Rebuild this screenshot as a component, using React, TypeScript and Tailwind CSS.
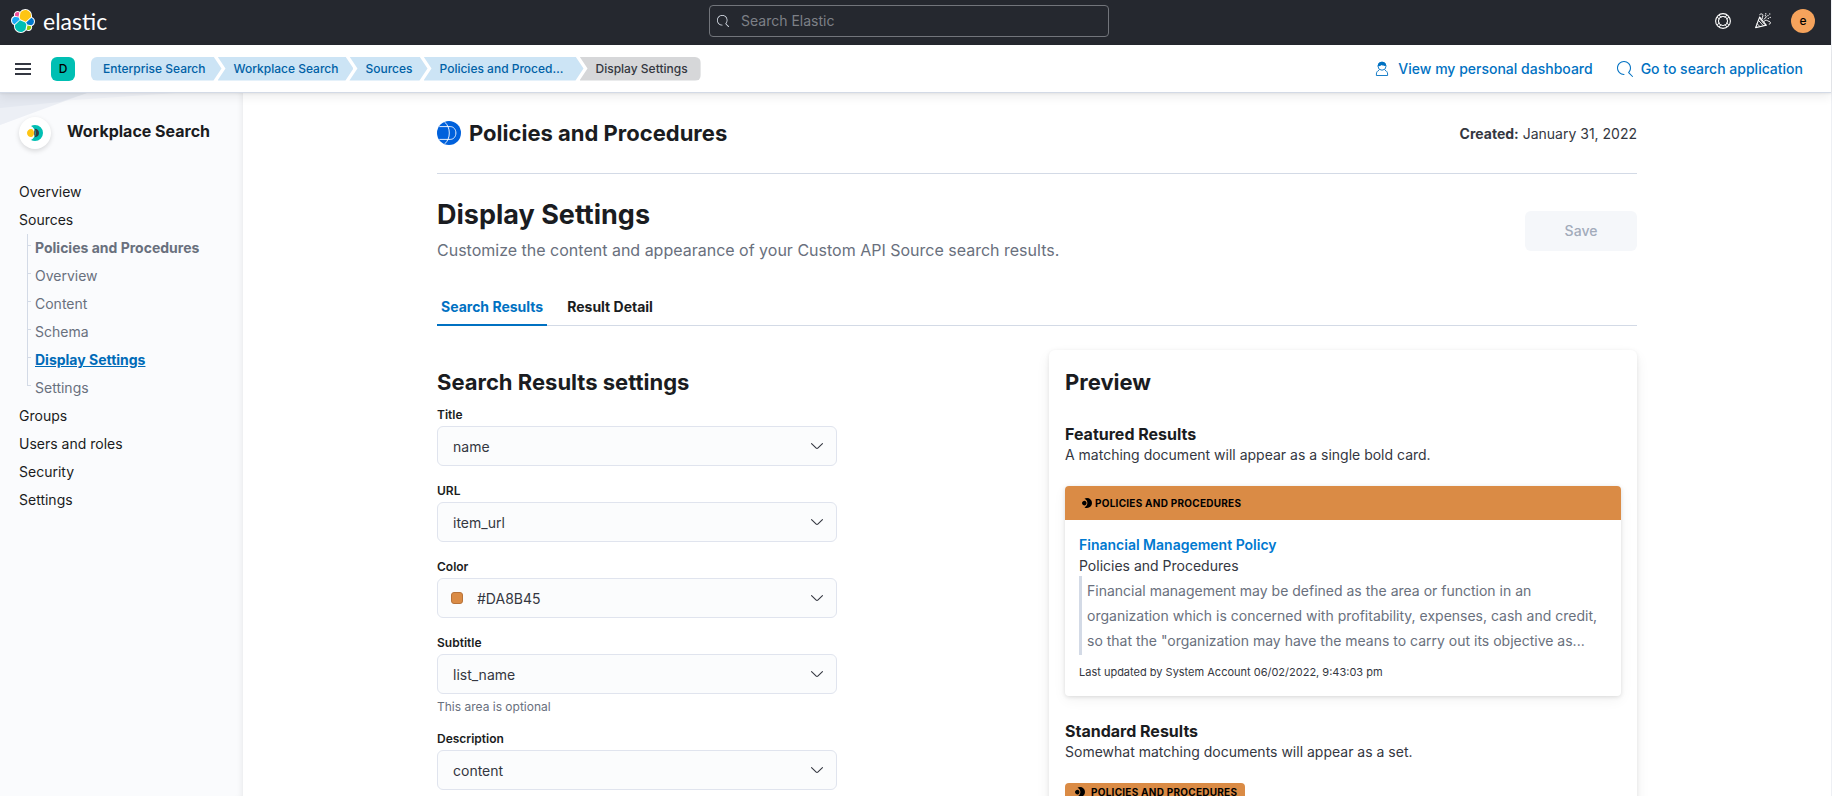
import type { ReactNode } from "react";

type SelectFieldProps = {
  id: string;
  label: string;
  value: string;
  help?: string;
  swatch?: boolean;
};

const crumbs = ["Enterprise Search", "Workplace Search", "Sources", "Policies and Procedures"];

const sourceLinks = [
  { label: "Policies and Procedures", style: "font-bold text-[#69707d]" },
  { label: "Overview", style: "text-[#69707d]" },
  { label: "Content", style: "text-[#69707d]" },
  { label: "Schema", style: "text-[#69707d]" },
  { label: "Display Settings", style: "font-bold text-[#006bb8] underline" },
  { label: "Settings", style: "text-[#69707d]" },
];

function ElasticLogo() {
  const shapes = [
    ["#fec514", "M12.58 13.787l7.002 3.211 7.066-6.213a7.849 7.849 0 00.152-1.557c0-4.287-3.464-7.764-7.733-7.764-2.557 0-4.943 1.255-6.387 3.356l-1.175 6.1 1.075 2.867z"],
    ["#00bfb3", "M5.333 21.228A7.964 7.964 0 005.18 22.814c0 4.298 3.474 7.789 7.743 7.789 2.568 0 4.972-1.274 6.419-3.404l1.166-6.1-1.556-2.99-7.03-3.214-6.589 6.334z"],
    ["#f04e98", "M5.288 9.067l4.8 1.137 1.051-5.477a3.798 3.798 0 00-4.597.014 3.854 3.854 0 00-1.254 4.326z"],
    ["#1ba9f5", "M4.872 10.214A5.346 5.346 0 001.334 15.255a5.34 5.34 0 003.428 4.99l6.73-6.108-1.235-2.655-5.385-1.268z"],
    ["#93c90e", "M20.873 27.199a3.79 3.79 0 002.285.78 3.812 3.812 0 003.079-1.573 3.863 3.863 0 00.521-3.442l-4.795-1.127-1.09 5.362z"],
    ["#0077cc", "M21.848 20.563l5.28 1.238a5.346 5.346 0 003.538-5.042 5.34 5.34 0 00-3.438-4.98l-6.907 6.074 1.527 2.71z"],
  ];
  return (
    <svg viewBox="0 0 32 32" className="size-6 shrink-0" aria-hidden="true">
      {shapes.map(([fill, d]) => (
        <path key={`outline-${fill}`} d={d} fill="#fff" stroke="#fff" strokeWidth="2.6" strokeLinejoin="round" />
      ))}
      {shapes.map(([fill, d]) => (
        <path key={fill} d={d} fill={fill} />
      ))}
    </svg>
  );
}

function SearchIcon({ className }: { className: string }) {
  return (
    <svg viewBox="0 0 16 16" className={className} fill="currentColor" aria-hidden="true">
      <path d="M11.271 11.978l3.872 3.873a.502.502 0 00.708 0 .502.502 0 000-.708l-3.565-3.564c2.38-2.747 2.267-6.923-.342-9.532-2.73-2.73-7.17-2.73-9.898 0-2.728 2.729-2.728 7.17 0 9.9a6.955 6.955 0 004.949 2.05.5.5 0 000-1 5.96 5.96 0 01-4.242-1.757 6.01 6.01 0 010-8.486 6.004 6.004 0 018.484 0 6.01 6.01 0 010 8.486.5.5 0 00.034.738z" />
    </svg>
  );
}

function HelpIcon() {
  return (
    <svg viewBox="0 0 16 16" className="size-4" fill="none" stroke="currentColor" aria-hidden="true">
      <circle cx="8" cy="8" r="7.4" strokeWidth="1.1" />
      <circle cx="8" cy="8" r="4.5" strokeWidth="1.1" />
      <path d="M2.1 4.3l2.7 1.9M4.3 2.1l1.9 2.7M13.9 4.3l-2.7 1.9M11.7 2.1l-1.9 2.7M2.1 11.7l2.7-1.9M4.3 13.9l1.9-2.7M13.9 11.7l-2.7-1.9M11.7 13.9l-1.9-2.7" />
    </svg>
  );
}

function CheerIcon() {
  return (
    <svg viewBox="0 0 16 16" className="size-4" fill="none" stroke="currentColor" strokeLinejoin="round" strokeLinecap="round" aria-hidden="true">
      <path d="M4.6 4.2L.6 14.6l10.6-2.4z" strokeWidth="1.1" />
      <path d="M4.6 4.2c1 3.4 3.3 6.2 6.6 8M3.5 7.4l4.8 5.3M2.2 10.8l2.7 2.7" strokeWidth="0.9" />
      <path d="M4.7 1.600c1.600-1.500 3.600-.6 3.200 1.400-.2 1-.9 1.500-.8 2.600M9.200 8.300c1-1.200 2.300-1.400 3.300-.6.9.8 2.600.5 2.900 1.800.2 1-.4 1.600-1.200 1.600M9.200 6.200l2.400-2.600" strokeWidth="1" />
      <path d="M10.800.7v.2M14.800.9v.2M13 2.400v.2M15.200 4.300v.2M13.300 5.300v.2M10.300 2.600v.2" strokeWidth="1.2" />
    </svg>
  );
}

function UserIcon() {
  return (
    <svg viewBox="0 0 16 16" className="size-4" fill="none" stroke="currentColor" strokeWidth="0.9" aria-hidden="true">
      <circle cx="8" cy="5.2" r="4" />
      <path d="M3.700 5.200C3.700 2.400 5.600.7 8 .7s4.300 1.700 4.300 4.100c-2.400.4-3.700-.1-4.600-.8-.9 1-2.300 1.200-4 1.200z" fill="currentColor" stroke="none" />
      <path d="M5 9.300c-1.700.6-2.600 2-2.600 3.700v1.500h11.200V13c0-1.700-.9-3.100-2.600-3.700" />
    </svg>
  );
}

function WorkplaceIcon() {
  return (
    <svg viewBox="0 0 16 16" className="size-4" aria-hidden="true">
      <path d="M4 1c1.200-.7 2.500-1 4-1a8 8 0 010 16c-1.500 0-2.800-.3-4-1 2.700-1.600 4.200-4 4.200-7S6.700 2.600 4 1z" fill="#00bfb3" />
      <path d="M7.6 3.8c2.800 0 4.400 1.900 4.400 4.200s-1.600 4.200-4.400 4.200c.8-1.200 1.200-2.700 1.200-4.200s-.4-3-1.200-4.200z" fill="#343741" />
      <path d="M7.200 4.200C7.900 5.400 8.200 6.600 8.200 8s-.3 2.600-1 3.800z" fill="#343741" />
      <path d="M4.200 4C5.800 4 7 5.700 7 8s-1.200 4-2.800 4A4 4 0 010 8c0-2.300 1.800-4 4.200-4z" fill="#fec514" />
    </svg>
  );
}

function SourceIcon() {
  return (
    <svg viewBox="0 0 24 24" className="size-6 shrink-0" fill="none" stroke="#fff" strokeWidth="0.9" aria-hidden="true">
      <circle cx="12" cy="12" r="12" fill="#0061dc" stroke="none" />
      <path d="M2.3 5.600h11c3.300 0 5.600 2.800 5.600 6.400s-2.300 6.400-5.600 6.400h-11" />
      <path d="M7.800 1.200C10.800 4 12.300 7.700 12.300 12S10.800 20 7.800 22.800" />
    </svg>
  );
}

function TagIcon() {
  return (
    <svg viewBox="0 0 16 16" className="size-[10px] shrink-0" fill="#000" aria-hidden="true">
      <path d="M4 1c1.200-.7 2.500-1 4-1a8 8 0 010 16c-1.500 0-2.800-.3-4-1 3-1.500 4.600-4 4.600-7S7 2.500 4 1z" />
      <path d="M4 4.200c1.900 0 3.200 1.600 3.200 3.800s-1.300 3.800-3.200 3.800S0 10.200 0 8s2-3.800 4-3.800z" />
    </svg>
  );
}

function SelectField({ id, label, value, help, swatch }: SelectFieldProps) {
  return (
    <div className="flex flex-col items-start pb-[17px]">
      <label htmlFor={id} className="pb-[3px] text-xs leading-4 font-semibold text-[#1a1c21]">
        {label}
      </label>
      <div className="relative w-full max-w-[400px]">
        <select
          id={id}
          defaultValue={value}
          className={`block h-10 w-full appearance-none rounded-md border border-[#e0e4ee] bg-[#fbfcfd] pt-[2px] pr-10 text-sm text-[#343741] ${swatch ? "pl-[39px]" : "pl-[15px]"}`}
        >
          <option>{value}</option>
        </select>
        {swatch && <span className="absolute top-[14px] left-[14px] size-3 rounded-[3px] border border-[#b8733a] bg-[#da8b45]" />}
        <svg viewBox="0 0 16 16" className="pointer-events-none absolute top-3 right-3 size-4" fill="#343741" aria-hidden="true">
          <path d="M13.069 5.157L8.384 9.768a.546.546 0 01-.768 0L2.930 5.158a.552.552 0 00-.771 0 .53.53 0 000 .759l4.684 4.610c.641.631 1.672.63 2.312 0l4.684-4.610a.53.53 0 000-.76.552.552 0 00-.771 0z" />
        </svg>
      </div>
      {help && <p className="pt-[5px] text-xs leading-[15px] text-[#69707d]">{help}</p>}
    </div>
  );
}

function NavItem({ children }: { children: ReactNode }) {
  return (
    <li className="h-7">
      <a href="#" className="leading-7 text-[#1a1c21]">{children}</a>
    </li>
  );
}

function TopBar() {
  return (
    <header className="flex h-[45px] shrink-0 items-center justify-between bg-[#25282f] pb-[3px] text-white">
      <a href="#" className="flex w-[115px] items-center gap-2 pl-[11px]">
        <ElasticLogo />
        <span className="font-[Lato,sans-serif] text-[23px] leading-6">elastic</span>
      </a>
      <div className="flex h-8 w-[400px] items-center gap-3 rounded border border-[#72757b] px-[7px] text-[#dfe5ef]">
        <SearchIcon className="size-3 shrink-0" />
        <input type="search" aria-label="Search Elastic" placeholder="Search Elastic" className="w-full bg-transparent text-sm outline-none placeholder:text-[#7d8087]" />
      </div>
      <div className="flex items-center pr-2">
        <button type="button" aria-label="Help" className="flex size-10 items-center justify-center"><HelpIcon /></button>
        <button type="button" aria-label="News" className="flex size-10 items-center justify-center"><CheerIcon /></button>
        <button type="button" aria-label="Account" className="flex size-10 items-center justify-center">
          <span className="flex size-6 items-center justify-center rounded-full bg-[#f5a35c] text-xs font-medium text-black">e</span>
        </button>
      </div>
    </header>
  );
}

function SubBar() {
  return (
    <div className="relative z-10 flex h-12 shrink-0 items-center border-b border-[#d3dae6] bg-white pr-7 shadow-[0_1px_2px_rgba(0,0,0,0.06),0_4px_10px_rgba(0,0,0,0.07)]">
      <button type="button" aria-label="Toggle navigation" className="flex w-[46px] flex-col items-center gap-[3px]">
        <span className="h-[2px] w-4 bg-[#343741]" />
        <span className="h-[2px] w-4 bg-[#343741]" />
        <span className="h-[2px] w-4 bg-[#343741]" />
      </button>
      <button type="button" className="ml-[5px] flex size-6 items-center justify-center rounded-md bg-[#00bfb3] text-xs font-medium text-black">D</button>
      <nav aria-label="Breadcrumbs" className="ml-4 text-xs font-medium">
        <ol className="flex">
          {crumbs.map((crumb, i) =>
            i === 0 ? (
              <li key={crumb} className="h-6 rounded-l-md bg-[#cce4f5] pr-4 pl-3 leading-6 text-[#0061a6] [clip-path:polygon(0_0,calc(100%-8px)_0,100%_50%,calc(100%-8px)_100%,0_100%)]">
                <a href="#">{crumb}</a>
              </li>
            ) : (
              <li key={crumb} className="-ml-1 h-6 max-w-[160px] truncate bg-[#cce4f5] pr-[15px] pl-4 leading-6 text-[#0061a6] [clip-path:polygon(0_0,calc(100%-8px)_0,100%_50%,calc(100%-8px)_100%,0_100%,8px_50%)]">
                <a href="#">{crumb}</a>
              </li>
            ),
          )}
          <li aria-current="page" className="-ml-1 h-6 rounded-r-md bg-[#d6d7d9] pr-[13px] pl-4 leading-6 text-[#343741] [clip-path:polygon(0_0,100%_0,100%_100%,0_100%,8px_50%)]">
            Display Settings
          </li>
        </ol>
      </nav>
      <div className="ml-auto flex items-center gap-6 text-sm font-medium text-[#0071c2]">
        <a href="#" className="flex items-center gap-2"><UserIcon />View my personal dashboard</a>
        <a href="#" className="flex items-center gap-2"><SearchIcon className="size-4" />Go to search application</a>
      </div>
    </div>
  );
}

function Sidebar() {
  return (
    <aside className="relative w-[243px] shrink-0 bg-[#fafbfd] px-[19px] pt-6 text-sm shadow-[inset_-6px_0_6px_-5px_rgba(0,0,0,0.08)]">
      <svg viewBox="0 0 176 32" className="absolute top-0 left-0 h-8 w-44" aria-hidden="true">
        <path d="M0 0h176L60 8 0 32z" fill="#f3f5fa" />
        <path d="M0 0h87L0 32z" fill="#eceff5" />
        <path d="M0 0h87L60 9 0 15z" fill="#e4e8f0" />
      </svg>
      <div className="relative flex gap-4">
        <span className="flex size-8 items-center justify-center rounded-full bg-white shadow-[0_2px_5px_rgba(0,0,0,0.14)]">
          <WorkplaceIcon />
        </span>
        <h2 className="pt-1 text-base leading-5 font-bold text-[#1a1c21]">Workplace Search</h2>
      </div>
      <nav aria-label="Workplace Search" className="relative pt-[29px]">
        <ul>
          <NavItem>Overview</NavItem>
          <NavItem>Sources</NavItem>
          <li>
            <ul className="pl-2">
              {sourceLinks.map(({ label, style }, i) => (
                <li key={label} className="flex h-7">
                  <span className={`flex w-px bg-[#d3dae6] ${i === sourceLinks.length - 1 ? "h-3" : "h-7"}`} />
                  <span className="mt-[11px] mr-1 h-px w-[3px] bg-[#d3dae6]" />
                  <a href="#" className={`leading-7 ${style}`}>{label}</a>
                </li>
              ))}
            </ul>
          </li>
          <NavItem>Groups</NavItem>
          <NavItem>Users and roles</NavItem>
          <NavItem>Security</NavItem>
          <NavItem>Settings</NavItem>
        </ul>
      </nav>
    </aside>
  );
}

function Preview() {
  return (
    <section className="w-[588px] rounded-md bg-white p-4 text-sm shadow-[0_1px_4px_rgba(0,0,0,0.08),0_6px_14px_rgba(0,0,0,0.07)]">
      <h2 className="text-[22px] leading-8 font-bold text-[#1a1c21]">Preview</h2>
      <h3 className="pt-[25px] text-base leading-[22px] font-bold text-[#1a1c21]">Featured Results</h3>
      <p className="leading-5">A matching document will appear as a single bold card.</p>
      <article className="mt-[21px] overflow-hidden rounded bg-white shadow-[0_1px_4px_rgba(0,0,0,0.12),0_4px_14px_rgba(0,0,0,0.05)]">
        <div className="flex h-[34px] items-center gap-[3px] bg-[#da8b45] px-[17px] text-[10px] font-bold tracking-wide text-black uppercase">
          <TagIcon />Policies and Procedures
        </div>
        <div className="px-[14px] pt-[14px] pb-4">
          <a href="#" className="block leading-[22px] font-semibold text-[#0079d0]">Financial Management Policy</a>
          <p className="leading-5">Policies and Procedures</p>
          <blockquote className="border-l-[3px] border-[#d3dae6] pt-[2px] pb-[2px] pl-[5px] leading-[25px] text-[#69707d]">
            Financial management may be defined as the area or function in an organization which is concerned with profitability, expenses, cash and credit, so that the "organization may have the means to carry out its objective as...
          </blockquote>
          <p className="pt-[9px] text-[11px] leading-4">Last updated by System Account 06/02/2022, 9:43:03 pm</p>
        </div>
      </article>
      <h3 className="pt-6 text-base leading-[22px] font-bold text-[#1a1c21]">Standard Results</h3>
      <p className="leading-5">Somewhat matching documents will appear as a set.</p>
      <div className="mt-[21px] flex">
        <span className="flex h-[18px] items-center gap-[6px] rounded-t bg-[#da8b45] pr-2 pl-[10px] text-[10px] font-bold tracking-wide text-black uppercase">
          <TagIcon />Policies and Procedures
        </span>
      </div>
    </section>
  );
}

export default function App() {
  return (
    <div className="flex h-screen flex-col border-r border-[#eef0f4] bg-white font-[Inter,sans-serif] text-[#343741]">
      <TopBar />
      <SubBar />
      <div className="flex min-h-0 flex-1">
        <Sidebar />
        <main className="min-w-0 flex-1 overflow-y-auto px-6 [scrollbar-width:none]">
          <div className="mx-auto max-w-[1200px]">
            <div className="flex items-center justify-between border-b border-[#d3dae6] pt-6 pb-6">
              <h1 className="flex items-center gap-2 text-[22px] leading-8 font-bold text-[#1a1c21]">
                <SourceIcon />Policies and Procedures
              </h1>
              <p className="pt-px text-sm"><strong>Created:</strong> January 31, 2022</p>
            </div>
            <div className="flex items-center justify-between pt-[25px] pb-[31px]">
              <div>
                <h2 className="text-[27px] leading-8 font-bold text-[#1a1c21]">Display Settings</h2>
                <p className="pt-[7px] text-base leading-6 text-[#69707d]">Customize the content and appearance of your Custom API Source search results.</p>
              </div>
              <button type="button" disabled className="h-10 w-28 rounded-md bg-[#f5f7fa] text-sm font-medium text-[#a2abba]">Save</button>
            </div>
            <div role="tablist" className="flex h-[33px] gap-4 border-b border-[#d3dae6] text-sm font-bold">
              <button type="button" role="tab" aria-selected="true" className="-mb-px border-b-2 border-[#0071c2] px-1 pb-1 text-[#0071c2]">Search Results</button>
              <button type="button" role="tab" aria-selected="false" className="-mb-px border-b-2 border-transparent px-1 pb-1 text-[#1a1c21]">Result Detail</button>
            </div>
            <div className="flex justify-between gap-6 pt-6">
              <section className="max-w-[588px] flex-1 pt-4">
                <h2 className="text-[22px] leading-8 font-bold text-[#1a1c21]">Search Results settings</h2>
                <form className="pt-[9px]">
                  <SelectField id="title" label="Title" value="name" />
                  <SelectField id="url" label="URL" value="item_url" />
                  <SelectField id="color" label="Color" value="#DA8B45" swatch />
                  <SelectField id="subtitle" label="Subtitle" value="list_name" help="This area is optional" />
                  <SelectField id="description" label="Description" value="content" />
                </form>
              </section>
              <Preview />
            </div>
          </div>
        </main>
      </div>
    </div>
  );
}
